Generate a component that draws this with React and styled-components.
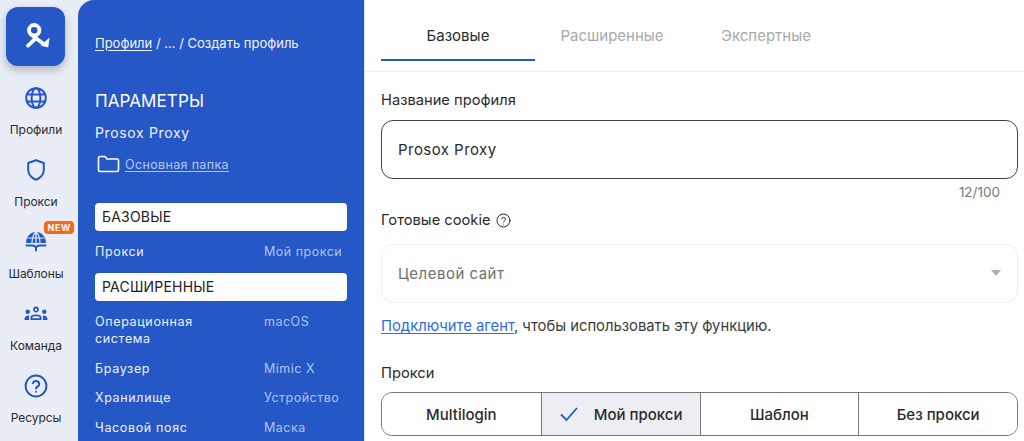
import React from 'react';
import styled, { createGlobalStyle } from 'styled-components';

const Global = createGlobalStyle`
  html, body { margin: 0; padding: 0; height: 441px; overflow: hidden; background: #fff; }
  * { box-sizing: border-box; }
  body { font-family: Inter, "Noto Sans", sans-serif; -webkit-font-smoothing: antialiased; }
`;

const Page = styled.div`
  display: flex;
  width: 1024px;
  height: 441px;
  overflow: hidden;
  background: #e9edf6;
`;

const Rail = styled.nav`
  width: 78px;
  flex: none;
  padding: 7px 0 0 6px;
  display: flex;
  flex-direction: column;
`;

const LogoTile = styled.div`
  flex: none;
  width: 59px;
  height: 59px;
  border-radius: 12px;
  background: #2557c7;
  box-shadow: 0 4px 9px rgba(40, 50, 80, 0.32);
  display: flex;
  align-items: center;
  justify-content: center;
  margin-bottom: 20px;
`;

const RailItem = styled.div`
  flex: none;
  position: relative;
  width: 60px;
  height: 72px;
  display: flex;
  flex-direction: column;
  align-items: center;
  color: #2557c7;
`;

const RailIcon = styled.div`
  height: 24px;
  width: 24px;
  display: flex;
  align-items: center;
  justify-content: center;
`;

const RailLabel = styled.span`
  margin-top: 12px;
  font-size: 12px;
  line-height: 16px;
  letter-spacing: -0.05px;
  color: #2b2b2b;
`;

const NewBadge = styled.span`
  position: absolute;
  top: -9px;
  left: 38px;
  height: 13px;
  padding: 0 3.5px;
  border-radius: 4px;
  background: #f56a12;
  color: #fff;
  font-size: 9px;
  font-weight: 700;
  line-height: 13px;
  letter-spacing: 0.6px;
`;

const Side = styled.aside`
  width: 286px;
  flex: none;
  background: #2557c7;
  border-top-left-radius: 16px;
  padding: 35px 17px 0;
  color: #fff;
`;

const Crumbs = styled.div`
  font-size: 13px;
  line-height: 16px;
  color: #f2f5fc;
  white-space: nowrap;
  u { text-underline-offset: 2px; }
`;

const Title = styled.h1`
  margin: 39px 0 0;
  font-size: 17px;
  font-weight: 400;
  line-height: 22px;
  letter-spacing: 0.1px;
`;

const ProfileName = styled.div`
  margin-top: 11px;
  font-size: 14px;
  line-height: 20px;
  letter-spacing: 0.65px;
  color: #f0f3fb;
`;

const FolderRow = styled.div`
  margin-top: 10px;
  height: 22px;
  display: flex;
  align-items: center;
  gap: 5px;
  padding-left: 2px;
`;

const FolderLink = styled.a`
  font-size: 12.5px;
  letter-spacing: 0.35px;
  color: #b5c8f0;
  text-decoration: underline;
  text-underline-offset: 2px;
`;

const SectionBar = styled.div`
  width: 252px;
  height: 28px;
  margin-top: ${p => p.$top}px;
  background: #fff;
  border-radius: 4px;
  padding-left: 7px;
  font-size: 14px;
  line-height: 28px;
  letter-spacing: 0.2px;
  color: #222;
`;

const Row = styled.div`
  display: grid;
  grid-template-columns: 169px 1fr;
  margin-top: ${p => p.$top}px;
  font-size: 12.5px;
  line-height: 17px;
  letter-spacing: 0.5px;
`;

const RowKey = styled.span`
  color: #eef2fb;
  letter-spacing: 0.65px;
`;

const RowValue = styled.span`
  color: #afc3ee;
  white-space: nowrap;
`;

const Main = styled.main`
  flex: 1;
  background: #fff;
  border-left: 1px solid #dfe5f2;
  min-width: 0;
`;

const Tabs = styled.div`
  height: 72px;
  border-bottom: 1px solid #eeeeee;
  padding-left: 16px;
  display: flex;
`;

const Tab = styled.div`
  width: 154px;
  height: 61px;
  padding-top: 26px;
  text-align: center;
  font-size: 15px;
  line-height: 20px;
  color: ${p => (p.$active ? '#2b2b2b' : '#a8a8a8')};
  border-bottom: ${p => (p.$active ? '2px solid #2557c7' : 'none')};
`;

const Form = styled.div`
  padding: 18px 6px 0 16px;
`;

const Label = styled.div`
  display: flex;
  align-items: center;
  gap: 5px;
  margin-top: ${p => p.$top || 0}px;
  font-size: 14.7px;
  line-height: 20px;
  color: #2b2b2b;
`;

const TextField = styled.div`
  height: 59px;
  margin-top: 10px;
  border: 1px solid #444;
  border-radius: 12px;
  padding-left: 16px;
  display: flex;
  align-items: center;
  font-size: 15px;
  letter-spacing: 0.45px;
  color: #2b2b2b;
`;

const Counter = styled.div`
  margin-top: 6px;
  padding-right: 18px;
  text-align: right;
  font-size: 13.5px;
  line-height: 14px;
  color: #777;
`;

const SelectField = styled.div`
  height: 59px;
  margin-top: 14px;
  border: 1px solid #eeeeee;
  border-radius: 12px;
  padding: 0 16px;
  display: flex;
  align-items: center;
  justify-content: space-between;
  font-size: 15px;
  letter-spacing: 0.5px;
  color: #707070;
`;

const Caret = styled.span`
  width: 0;
  height: 0;
  margin-top: -2px;
  border-left: 5px solid transparent;
  border-right: 5px solid transparent;
  border-top: 6px solid #b0b0b0;
`;

const Hint = styled.div`
  margin-top: 14px;
  font-size: 14.8px;
  line-height: 18px;
  color: #3a3a3a;
  a { color: #2f6ce0; text-decoration: underline; text-underline-offset: 2px; }
`;

const Segments = styled.div`
  width: 637px;
  height: 44px;
  margin-top: 9px;
  display: grid;
  grid-template-columns: repeat(4, 1fr);
  border: 1px solid #777;
  border-radius: 11px;
  overflow: hidden;
`;

const Segment = styled.div`
  display: flex;
  align-items: center;
  justify-content: center;
  gap: 15px;
  font-size: 15px;
  font-weight: 500;
  color: #2b2b2b;
  background: ${p => (p.$on ? '#eceef4' : '#fff')};
  & + & { border-left: 1px solid #777; }
`;

const stroke = { fill: 'none', stroke: 'currentColor', strokeWidth: 2, strokeLinecap: 'round', strokeLinejoin: 'round' };

const Logo = () => (
  <svg width="28" height="28" viewBox="0 0 28 28" fill="none" stroke="#fff" strokeWidth="3.8">
    <circle cx="12.2" cy="7.2" r="5.2" />
    <path d="M8 10.8 L23 22" />
    <path d="M14.2 14.8 L6 22.6" strokeLinecap="round" />
    <path d="M27.6 14.6 L26.2 24.6 L18.6 22.4 Z" fill="#fff" stroke="none" />
  </svg>
);

const GlobeIcon = () => (
  <svg width="22" height="22" viewBox="0 0 22 22" {...stroke}>
    <circle cx="11" cy="11" r="9.8" />
    <ellipse cx="11" cy="11" rx="4.4" ry="9.8" />
    <path d="M1.8 7.6h18.4M1.8 14.4h18.4" />
  </svg>
);

const ShieldIcon = () => (
  <svg width="20" height="24" viewBox="0 0 20 24" {...stroke}>
    <path d="M10 2.2 L17.8 5 V11.5 C17.8 16.5 14.5 20 10 21.8 C5.5 20 2.2 16.5 2.2 11.5 V5 Z" />
  </svg>
);

const UmbrellaIcon = () => (
  <svg width="22" height="24" viewBox="0 0 22 24">
    <path fill="currentColor" d="M11 2 C5.5 2 1.2 6.2 1 13 H21 C20.8 6.2 16.5 2 11 2 Z" />
    <path fill="none" stroke="#e9edf6" strokeWidth="1.2" d="M11 2 V13 M11 2 C8.5 4.5 7 8.5 7 13 M11 2 C13.5 4.5 15 8.5 15 13 M2.5 8 H19.5" />
    <path fill="none" stroke="currentColor" strokeWidth="2" strokeLinejoin="round" strokeLinecap="round" d="M1.5 15.5 H7.5 C9 15.5 10.5 16.5 11 18 C11.5 16.5 13 15.5 14.5 15.5 H20.5 M11 18 V20.5" />
  </svg>
);

const TeamIcon = () => (
  <svg width="26" height="18" viewBox="0 0 26 18" fill="currentColor">
    <path d="M13 1 a3.2 3.2 0 1 0 .01 0 Z M13 3 a1.3 1.3 0 1 1 -.01 0 Z" fillRule="evenodd" />
    <circle cx="4" cy="6.5" r="2.4" />
    <circle cx="22" cy="6.5" r="2.4" />
    <path d="M0.5 15.5 C0.5 12 2 10.5 5.5 10.5 L5.5 15.5 Z" />
    <path d="M25.5 15.5 C25.5 12 24 10.5 20.5 10.5 L20.5 15.5 Z" />
    <path fillRule="evenodd" d="M7 15.5 V13 C7 10.5 9 9.5 13 9.5 C17 9.5 19 10.5 19 13 V15.5 Z M9 13.6 H17 V13 C17 12 15.5 11.5 13 11.5 C10.5 11.5 9 12 9 13 Z" />
  </svg>
);

const HelpIcon = ({ size = 24, sw = 2 }) => (
  <svg width={size} height={size} viewBox="0 0 24 24" fill="none" stroke="currentColor" strokeWidth={sw} strokeLinecap="round" strokeLinejoin="round">
    <circle cx="12" cy="12" r="10.4" />
    <path d="M8.8 9.2a3.3 3.3 0 0 1 6.4 1c0 2.2-3.2 2.6-3.2 4.3" />
    <path d="M12 17.8h.01" />
  </svg>
);

const FolderIcon = () => (
  <svg width="23" height="18" viewBox="0 0 23 18" fill="none" stroke="#fff" strokeWidth="1.6" strokeLinejoin="round">
    <path d="M1.5 3 a1.5 1.5 0 0 1 1.5 -1.5 H8 L10 4 H20 a1.5 1.5 0 0 1 1.5 1.5 V15 a1.5 1.5 0 0 1 -1.5 1.5 H3 A1.5 1.5 0 0 1 1.5 15 Z" />
  </svg>
);

const CheckIcon = () => (
  <svg width="20" height="16" viewBox="0 0 20 16" fill="none" stroke="#2557c7" strokeWidth="1.8">
    <path d="M2 8.5 L7.5 14 L18 2" />
  </svg>
);

const railItems = [
  { label: 'Профили', icon: <GlobeIcon /> },
  { label: 'Прокси', icon: <ShieldIcon /> },
  { label: 'Шаблоны', icon: <UmbrellaIcon />, badge: true },
  { label: 'Команда', icon: <TeamIcon /> },
  { label: 'Ресурсы', icon: <HelpIcon /> },
];

export default function App() {
  return (
    <Page>
      <Global />
      <Rail>
        <LogoTile><Logo /></LogoTile>
        {railItems.map(item => (
          <RailItem key={item.label}>
            <RailIcon>{item.icon}</RailIcon>
            <RailLabel>{item.label}</RailLabel>
            {item.badge && <NewBadge>NEW</NewBadge>}
          </RailItem>
        ))}
      </Rail>
      <Side>
        <Crumbs><u>Профили</u> / ... / Создать профиль</Crumbs>
        <Title>ПАРАМЕТРЫ</Title>
        <ProfileName>Prosox Proxy</ProfileName>
        <FolderRow><FolderIcon /><FolderLink>Основная папка</FolderLink></FolderRow>
        <SectionBar $top={28}>БАЗОВЫЕ</SectionBar>
        <Row $top={12}><RowKey>Прокси</RowKey><RowValue>Мой прокси</RowValue></Row>
        <SectionBar $top={13}>РАСШИРЕННЫЕ</SectionBar>
        <Row $top={12}><RowKey>Операционная<br />система</RowKey><RowValue>macOS</RowValue></Row>
        <Row $top={13}><RowKey>Браузер</RowKey><RowValue>Mimic X</RowValue></Row>
        <Row $top={12}><RowKey>Хранилище</RowKey><RowValue>Устройство</RowValue></Row>
        <Row $top={13}><RowKey>Часовой пояс</RowKey><RowValue>Маска</RowValue></Row>
      </Side>
      <Main>
        <Tabs>
          <Tab $active>Базовые</Tab>
          <Tab>Расширенные</Tab>
          <Tab>Экспертные</Tab>
        </Tabs>
        <Form>
          <Label>Название профиля</Label>
          <TextField>Prosox Proxy</TextField>
          <Counter>12/100</Counter>
          <Label $top={11}>Готовые cookie <HelpIcon size={15} sw={1.6} /></Label>
          <SelectField>Целевой сайт<Caret /></SelectField>
          <Hint><a>Подключите агент</a>, чтобы использовать эту функцию.</Hint>
          <Label $top={28}>Прокси</Label>
          <Segments>
            <Segment>Multilogin</Segment>
            <Segment $on><CheckIcon />Мой прокси</Segment>
            <Segment>Шаблон</Segment>
            <Segment>Без прокси</Segment>
          </Segments>
        </Form>
      </Main>
    </Page>
  );
}
